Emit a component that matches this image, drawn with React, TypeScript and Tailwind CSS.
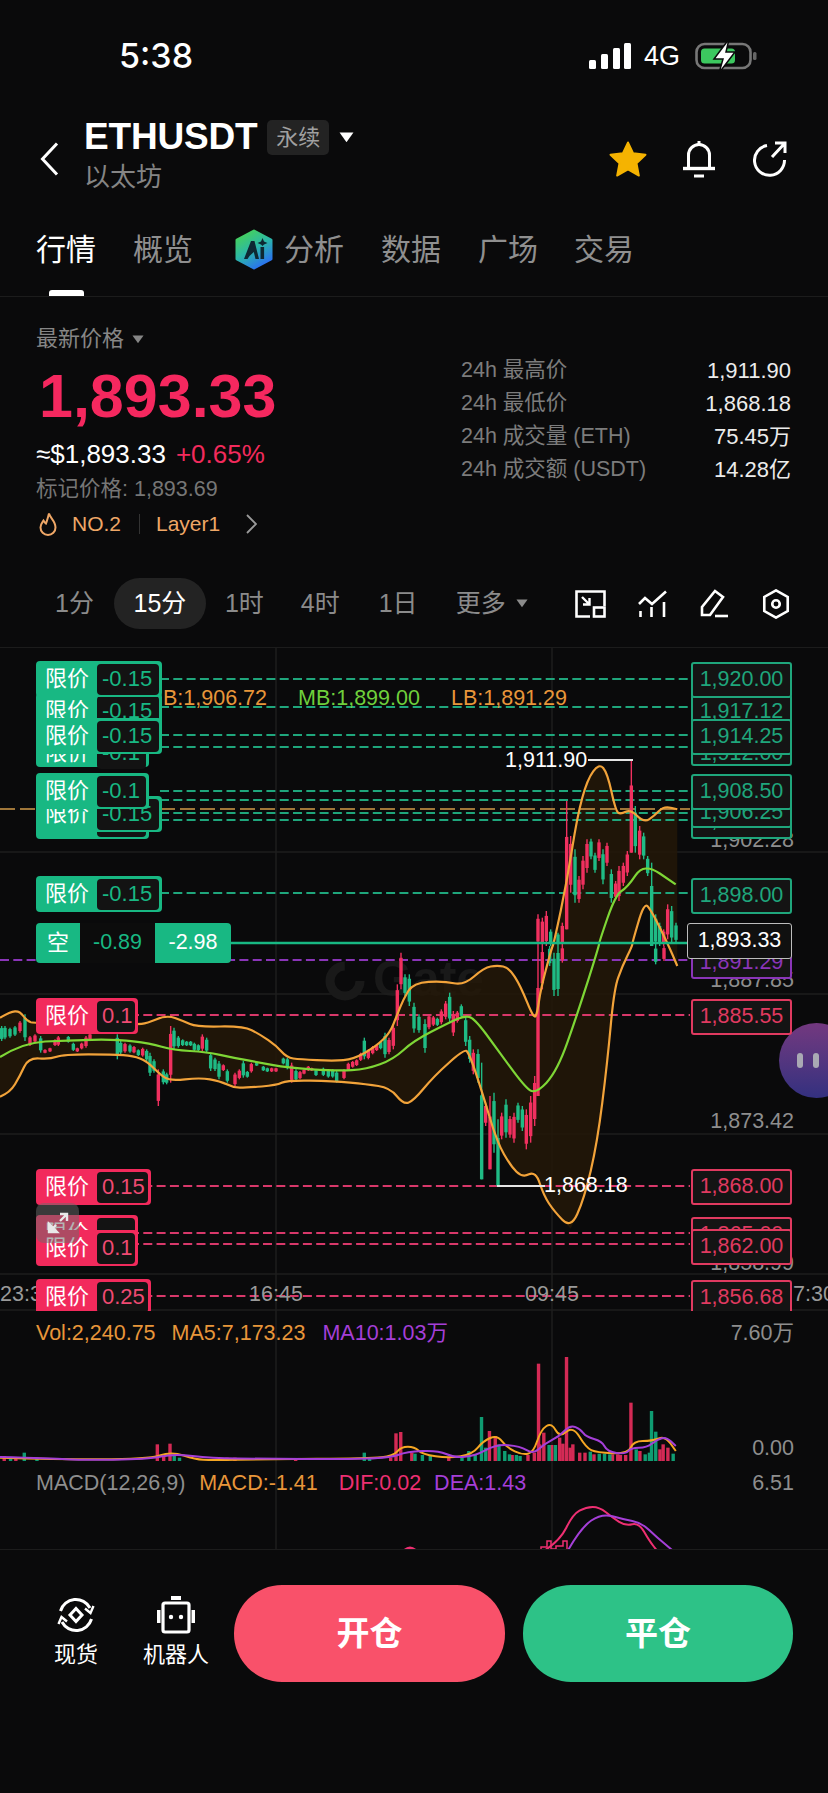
import React from "react";

const FONT = '"Liberation Sans","Noto Sans CJK SC",sans-serif';

type P = [number, number];
const z5 = (a: number[][]): P[] => a.map(([x, y]) => [x / 3, 945 + y / 3]);
const z6 = (a: number[][]): P[] => a.map(([x, y]) => [414 + x / 3, 945 + y / 3]);
const z4 = (a: number[][]): P[] => a.map(([x, y]) => [414 + x / 3, 645 + y / 3]);
const z7 = (a: number[][]): P[] => a.map(([x, y]) => [x / 1.894, 1300 + y / 3]);
const str = (p: P[]) => p.map(([x, y]) => `${x.toFixed(1)},${y.toFixed(1)}`).join(" ");
const smooth = (p: P[]) => {
  let d = `M${p[0][0].toFixed(1)} ${p[0][1].toFixed(1)}`;
  for (let i = 1; i < p.length - 1; i++) {
    const mx = (p[i][0] + p[i + 1][0]) / 2;
    const my = (p[i][1] + p[i + 1][1]) / 2;
    d += ` Q${p[i][0].toFixed(1)} ${p[i][1].toFixed(1)} ${mx.toFixed(1)} ${my.toFixed(1)}`;
  }
  const l = p[p.length - 1];
  return d + ` L${l[0].toFixed(1)} ${l[1].toFixed(1)}`;
};

const upper: P[] = [
  ...z5([[0,215],[30,197],[60,195],[80,225],[105,232],[410,235],[440,232],[500,207],[550,225],[590,243],[730,240],[780,265],[830,300],[860,335],[900,340],[1000,345],[1060,340],[1130,300],[1170,260]]),
  ...z5([[1190,210],[1210,160],[1240,110]]),
  ...z6([[90,105],[150,118],[210,65],[250,58],[285,65],[320,120],[360,220],[370,200],[380,130],[412,10]]),
  ...z4([[420,890],[460,700],[490,510],[520,400],[555,352],[580,380],[605,495],[620,505],[650,490],[690,530],[720,510],[750,480],[790,490]]),
];
const lower: P[] = [
  ...z5([[0,452],[30,440],[60,390],[85,335],[150,340],[190,325],[340,325],[400,330],[440,345],[480,385],[510,405],[600,395],[660,405],[700,425],[740,425],[830,418],[860,403],[1000,405],[1100,415],[1170,425],[1210,475],[1240,465]]),
  ...z6([[60,390],[150,310],[165,320],[205,440],[250,590],[290,660],[325,695],[365,675],[390,750],[420,795],[470,848],[510,760],[550,590],[580,350],[600,130],[625,60],[655,0]]),
  ...z4([[655,890],[690,770],[710,790],[760,890],[790,960]]),
];
const mid: P[] = [
  ...z5([[0,333],[70,290],[200,283],[350,280],[450,292],[520,312],[620,318],[700,335],[780,350],[860,365],[1010,375],[1100,370],[1180,340],[1240,285]]),
  ...z6([[105,230],[150,210],[180,215],[250,310],[330,420],[365,445],[430,375],[490,205],[555,0]]),
  ...z4([[555,890],[605,745],[640,725],[690,650],[785,715]]),
];

type C = [number, number, number, string];
const c5: C[] = [
  [5,240,285,"g"],[15,240,280,"g"],[30,245,275,"g"],[45,240,270,"g"],[60,225,260,"r"],[75,205,285,"g"],[90,270,300,"r"],[105,265,290,"r"],[122,270,320,"g"],[135,310,322,"r"],[150,305,318,"r"],[165,280,300,"r"],[175,270,300,"r"],[205,270,290,"g"],[220,290,315,"g"],[232,305,318,"r"],[245,290,310,"r"],[258,270,305,"r"],[270,262,285,"r"],[352,265,340,"g"],[362,285,325,"g"],[375,290,320,"r"],[390,295,320,"g"],[402,300,322,"r"],[415,310,330,"g"],[428,305,332,"r"],[440,310,345,"g"],[450,320,390,"g"],[462,340,380,"g"],[475,370,480,"r"],[490,370,415,"g"],[500,380,415,"g"],[512,240,410,"r"],[522,245,310,"g"],[535,270,305,"g"],[548,280,300,"g"],[560,285,300,"g"],[572,285,300,"g"],[583,290,315,"g"],[595,295,315,"g"],[607,265,315,"r"],[620,275,320,"g"],[632,320,375,"g"],[645,335,375,"g"],[657,345,400,"g"],[670,355,375,"r"],[682,370,410,"g"],[705,380,420,"r"],[718,370,400,"r"],[730,345,395,"g"],[742,375,395,"g"],[754,350,380,"r"],[770,350,360,"g"],[790,360,375,"g"],[802,365,378,"g"],[815,365,378,"r"],[828,365,378,"r"],[850,335,355,"g"],[862,335,370,"g"],[875,350,410,"r"],[888,370,405,"g"],[900,375,400,"r"],[912,370,385,"r"],[925,360,375,"r"],[935,365,375,"r"],[948,370,390,"g"],[970,365,390,"g"],[985,370,395,"g"],[998,370,395,"g"],[1010,375,410,"g"],[1032,370,400,"r"],[1045,350,375,"r"],[1058,345,365,"r"],[1070,340,360,"r"],[1082,320,345,"r"],[1093,275,340,"g"],[1105,310,340,"r"],[1118,300,325,"r"],[1130,295,315,"r"],[1142,285,310,"g"],[1155,260,335,"g"],[1167,275,325,"r"],[1180,235,310,"r"],[1192,115,240,"r"],[1203,20,130,"r"],[1215,85,150,"g"],[1228,85,180,"g"],
];
const c6: C[] = [
  [0,170,260,"g"],[15,205,260,"g"],[33,220,320,"g"],[45,205,250,"r"],[58,210,240,"r"],[70,215,240,"g"],[82,190,235,"r"],[95,165,220,"r"],[107,140,230,"g"],[118,195,270,"r"],[130,195,230,"r"],[142,175,215,"g"],[155,210,300,"g"],[167,270,350,"g"],[178,310,385,"r"],[192,310,410,"g"],[203,350,700,"g"],[215,470,540,"r"],[228,450,670,"r"],[240,440,620,"g"],[252,520,720,"g"],[263,500,580,"r"],[276,460,575,"g"],[288,510,575,"r"],[300,500,590,"r"],[312,470,530,"g"],[325,480,555,"g"],[337,490,610,"r"],[350,450,590,"r"],[362,390,540,"r"],[372,0,450,"r"],[385,0,130,"r"],[407,0,60,"g"],[420,20,150,"g"],[432,0,150,"g"],[445,0,50,"r"],[725,0,55,"g"],[750,0,45,"r"],
];
const c4: C[] = [
  [372,805,900,"r"],[385,815,900,"r"],[397,795,900,"r"],[410,850,900,"g"],[432,860,900,"g"],[445,830,900,"r"],[458,465,850,"r"],[470,570,740,"r"],[483,610,770,"g"],[495,690,770,"r"],[507,630,730,"r"],[519,580,680,"r"],[531,578,640,"g"],[543,620,680,"g"],[555,580,645,"r"],[567,610,715,"g"],[579,590,660,"r"],[592,670,770,"g"],[605,705,760,"r"],[615,660,765,"r"],[628,650,720,"r"],[640,615,690,"r"],[652,340,620,"r"],[664,480,620,"g"],[677,540,640,"r"],[689,560,640,"g"],[701,630,690,"g"],[713,650,900,"g"],[725,805,900,"g"],[737,830,900,"g"],[749,850,900,"r"],[761,775,880,"r"],[773,780,890,"g"],[786,830,890,"g"],
];

function Candles() {
  const all: { x: number; t: number; b: number; c: string }[] = [
    ...c5.map(([x, t, b, c]) => ({ x: x / 3, t: 945 + t / 3, b: 945 + b / 3, c })),
    ...c6.map(([x, t, b, c]) => ({ x: 414 + x / 3, t: 945 + t / 3, b: 945 + b / 3, c })),
    ...c4.map(([x, t, b, c]) => ({ x: 414 + x / 3, t: 645 + t / 3, b: 645 + b / 3, c })),
  ];
  return (
    <g>
      {all.map((k, i) => {
        const h = k.b - k.t;
        const col = k.c === "r" ? "#f0305f" : "#1fbb85";
        const inset = h > 60 ? h * 0.28 : h * 0.14;
        return (
          <g key={i}>
            <line x1={k.x} x2={k.x} y1={k.t} y2={k.b} stroke={col} strokeWidth={1.4} />
            <rect x={k.x - 1.7} y={k.t + inset} width={3.4} height={h - inset * (h > 60 ? 1 : 2)} fill={col} />
          </g>
        );
      })}
    </g>
  );
}

const volR: number[][] = [[1020,188],[1073,168],[1195,305],[750,397],[759,393],[298,430],[322,428],[927,390],[938,405],[1030,395],[1045,432],[1060,410],[1085,430],[1098,455],[1108,455],[1125,460],[1160,460],[1175,462],[1212,450],[1256,430],[1265,440],[970,462],[1000,462],[1012,455],[780,455],[8,465],[30,470],[310,465],[430,470],[445,470],[560,472],[740,470],[850,470],[1022,430],[1066,428],[1080,440],[1170,460],[1185,462],[1250,445]];
const volG: number[][] = [[912,348],[1234,330],[1242,392],[46,455],[690,455],[888,450],[900,462],[945,430],[956,450],[985,465],[1040,432],[1052,432],[1135,458],[1145,458],[1205,445],[1222,460],[1230,455],[1275,458],[786,458],[800,462],[815,465],[330,462],[340,470],[875,470],[20,468],[70,470],[700,468],[920,440],[965,460],[978,462],[1118,452],[1155,460]];

function Hexagon() {
  return (
    <svg width="38" height="41" viewBox="0 0 38 41" className="shrink-0">
      <defs>
        <linearGradient id="ai" x1="0.1" y1="0.1" x2="0.6" y2="1">
          <stop offset="0" stopColor="#45d05c" />
          <stop offset="0.5" stopColor="#2bb8a8" />
          <stop offset="1" stopColor="#2a74ee" />
        </linearGradient>
      </defs>
      <path d="M19 2 L36 11 V30 L19 39 L2 30 V11 Z" fill="url(#ai)" stroke="url(#ai)" strokeWidth="3" strokeLinejoin="round" />
      <path d="M9 30 L16 12 L19.5 12 L24 30 L20.5 30 L18.8 23 L14.5 27 L12.5 30 Z" fill="#0e2833" />
      <rect x="25.5" y="18" width="3.6" height="12" fill="#0e2833" />
      <path d="M27.5 9 L29 12.5 L32.5 14 L29 15.5 L27.5 17 L26 15.5 L22.5 14 L26 12.5 Z" fill="#0e2833" />
    </svg>
  );
}

function LeftTag({ top, w, tone, label, z = 1, h = 36 }: { top: number; w: number; tone: "g" | "r"; label: string; z?: number; h?: number }) {
  return (
    <div
      className={`absolute left-[36px] flex items-center rounded-[4px] pl-[9px] pr-[3px] text-[22px] text-white ${tone === "g" ? "bg-[#18b883]" : "bg-[#f22a5c]"}`}
      style={{ top: top - 647, width: w, height: h, zIndex: z }}
    >
      <span className="w-[52px] shrink-0 text-[22px] leading-none">限价</span>
      <span className={`flex h-[31px] flex-1 items-center rounded-[4px] bg-[#131313] pl-[5px] leading-none ${tone === "g" ? "text-[#18b883]" : "text-[#f04a72]"}`}>{label}</span>
    </div>
  );
}

function RightTag({ top, color, label, z = 1, h = 36 }: { top: number; color: string; label: string; z?: number; h?: number }) {
  return (
    <div
      className="absolute left-[691px] flex w-[101px] items-center justify-center rounded-[3px] border-2 bg-[#141414] text-[21.5px] leading-none"
      style={{ top: top - 647, height: h, borderColor: color, color, zIndex: z }}
    >
      {label}
    </div>
  );
}

function GreyPrice({ top, label }: { top: number; label: string }) {
  return (
    <div className="absolute right-[34px] text-[21.5px] leading-none text-[#8e8e8e]" style={{ top: top - 647 - 11 }}>
      {label}
    </div>
  );
}

function AxisLabel({ x, label, center }: { x: number; label: string; center?: boolean }) {
  return (
    <div className={`absolute top-[636px] text-[21.5px] leading-none text-[#9a9a9a] ${center ? "-translate-x-1/2" : ""}`} style={{ left: x }}>
      {label}
    </div>
  );
}

function ChartSvg() {
  const gd = [678, 706, 734, 746, 790, 799, 812, 819, 892];
  const rd = [1014, 1185, 1232, 1243, 1295];
  return (
    <svg className="absolute left-0 top-0" width="828" height="903" viewBox="0 647 828 903">
      {[851, 993, 1133, 1273, 1309].map((y) => (
        <line key={y} x1="0" x2="828" y1={y} y2={y} stroke="#1e1e1e" strokeWidth="1.5" />
      ))}
      <line x1="276" x2="276" y1="647" y2="1550" stroke="#1e1e1e" strokeWidth="1.5" />
      <line x1="552" x2="552" y1="647" y2="1550" stroke="#1e1e1e" strokeWidth="1.5" />
      <circle cx="345" cy="980" r="15" fill="none" stroke="#191919" strokeWidth="9" strokeDasharray="70 24" />
      <polygon points={str([...upper, ...[...lower].reverse()])} fill="#241808" fillOpacity="0.8" />
      {gd.map((y) => (
        <line key={y} x1="160" x2="690" y1={y} y2={y} stroke="#1fa67c" strokeWidth="2" strokeDasharray="9 4.3" />
      ))}
      <line x1="0" x2="690" y1="808" y2="808" stroke="#d19a4a" strokeWidth="1.5" strokeDasharray="15 5" />
      {rd.map((y) => (
        <line key={y} x1="130" x2="690" y1={y} y2={y} stroke="#d8386a" strokeWidth="2" strokeDasharray="9 4.3" />
      ))}
      <line x1="0" x2="690" y1="959" y2="959" stroke="#8a35b8" strokeWidth="2" strokeDasharray="9 4.3" />
      <Candles />
      <path d={smooth(upper)} fill="none" stroke="#f2a33a" strokeWidth="2.2" />
      <path d={smooth(lower)} fill="none" stroke="#f2a33a" strokeWidth="2.2" />
      <path d={smooth(mid)} fill="none" stroke="#7ed636" strokeWidth="2.2" />
      <line x1="231" x2="690" y1="942" y2="942" stroke="#18b883" strokeWidth="2.5" />
      <line x1="588" x2="633" y1="759" y2="759" stroke="#e5e5e5" strokeWidth="2" />
      <line x1="497" x2="545" y1="1185" y2="1185" stroke="#e5e5e5" strokeWidth="2" />
      {volR.map(([x, y], i) => {
        const X = x / 1.894;
        const Y = 1300 + y / 3;
        return <rect key={"r" + i} x={X - 1.7} y={Y} width="3.4" height={1460 - Y} fill="#d42a55" />;
      })}
      {volG.map(([x, y], i) => {
        const X = x / 1.894;
        const Y = 1300 + y / 3;
        return <rect key={"g" + i} x={X - 1.7} y={Y} width="3.4" height={1460 - Y} fill="#0f9c72" />;
      })}
      <path
        d={smooth(z7([[0,470],[100,475],[280,475],[325,452],[370,475],[400,478],[500,475],[700,472],[745,465],[760,437],[785,437],[800,460],[850,472],[895,460],[915,420],[942,402],[960,440],[990,462],[1010,455],[1025,385],[1045,365],[1060,410],[1085,375],[1110,440],[1130,455],[1190,458],[1200,420],[1235,420],[1260,405],[1280,450]]))}
        fill="none" stroke="#f5a623" strokeWidth="2"
      />
      <path
        d={smooth(z7([[0,468],[100,472],[150,477],[280,475],[330,458],[400,472],[500,473],[650,475],[740,470],[770,452],[830,448],[860,470],[900,465],[940,430],[985,435],[1010,460],[1030,430],[1060,405],[1080,372],[1100,385],[1110,408],[1140,420],[1150,452],[1185,460],[1195,440],[1225,440],[1245,415],[1262,408],[1280,435]]))}
        fill="none" stroke="#a53fd8" strokeWidth="2"
      />
      <path d={smooth(z7([[1030,750],[1060,720],[1085,640],[1110,618],[1135,618],[1160,650],[1185,675],[1210,665],[1230,720],[1245,750]]))} fill="none" stroke="#ee2f72" strokeWidth="2" />
      <path d={smooth(z7([[1075,750],[1100,680],[1140,637],[1180,655],[1215,665],[1245,710],[1275,750]]))} fill="none" stroke="#a53fd8" strokeWidth="2" />
      <path d="M404 1550 Q410 1544 416 1550" fill="none" stroke="#ee2f72" strokeWidth="3" />
      <path d="M541 1550 V1546 H547 V1540 H551 V1548 H556 V1545 H563 V1540 H567 V1550" fill="none" stroke="#ee2f72" strokeWidth="1.5" />
    </svg>
  );
}

function Chart() {
  return (
    <div className="relative h-[903px] w-full overflow-hidden border-y border-[#1c1c1c]">
      <div className="absolute left-[373px] top-[306px] text-[50px] font-bold leading-none text-[#191919]">Gate</div>
      <ChartSvg />

      <div className="absolute left-[163px] top-[40px] z-10 text-[21.5px] leading-none text-[#e8963a]">B:1,906.72</div>
      <div className="absolute left-[298px] top-[40px] z-10 text-[21.5px] leading-none text-[#6fd03c]">MB:1,899.00</div>
      <div className="absolute left-[451px] top-[40px] z-10 text-[21.5px] leading-none text-[#e8963a]">LB:1,891.29</div>

      <LeftTag top={738} w={113} tone="g" label="-0.1" z={1} h={28} />
      <LeftTag top={692} w={126} tone="g" label="-0.15" z={2} />
      <LeftTag top={660} w={126} tone="g" label="-0.15" z={3} />
      <LeftTag top={717} w={126} tone="g" label="-0.15" z={4} />
      <LeftTag top={802} w={113} tone="g" label="-0.1" z={1} />
      <LeftTag top={795} w={126} tone="g" label="-0.15" z={2} />
      <LeftTag top={772} w={113} tone="g" label="-0.1" z={3} />
      <LeftTag top={875} w={126} tone="g" label="-0.15" />

      <div className="absolute left-[36px] top-[275px] z-[5] flex h-[40px] w-[195px] items-stretch overflow-hidden rounded-[4px] bg-[#18b883] text-[21.5px] leading-none text-white">
        <span className="flex w-[44px] items-center justify-center text-[22px]">空</span>
        <span className="flex w-[75px] items-center justify-center bg-[#0c0c0c] text-[#18b883]">-0.89</span>
        <span className="flex flex-1 items-center justify-center">-2.98</span>
      </div>

      <LeftTag top={997} w={102} tone="r" label="0.1" />
      <LeftTag top={1168} w={115} tone="r" label="0.15" />
      <LeftTag top={1214} w={102} tone="r" label="" z={1} />
      <LeftTag top={1229} w={102} tone="r" label="0.1" z={2} />
      <div className="absolute left-0 top-[631px] z-[3] h-[32px] w-full overflow-hidden">
        <LeftTag top={647} w={115} tone="r" label="0.25" />
        <RightTag top={648} color="#e03a60" label="1,856.68" />
      </div>

      <div className="absolute left-[36px] top-[555px] z-[6] flex h-[40px] w-[43px] items-center justify-center rounded-[8px] bg-[#6a6a6a]/50">
        <svg width="24" height="24" viewBox="0 0 24 24" fill="none" stroke="#e8e8e8" strokeWidth="2.4">
          <path d="M14 3h7v7M21 3l-7 7" />
          <path d="M3 21v-8l8 8zM3 21l7-7" fill="#e8e8e8" />
        </svg>
      </div>

      <GreyPrice top={840} label="1,902.28" />
      <GreyPrice top={980} label="1,887.85" />
      <GreyPrice top={1121} label="1,873.42" />
      <GreyPrice top={1263} label="1,858.99" />

      <RightTag top={741} color="#1fa67c" label="1,912.00" z={1} h={24} />
      <RightTag top={661} color="#1fa67c" label="1,920.00" z={3} />
      <RightTag top={693} color="#1fa67c" label="1,917.12" z={2} />
      <RightTag top={718} color="#1fa67c" label="1,914.25" z={4} />
      <RightTag top={802} color="#1fa67c" label="1,906.00" z={1} h={36} />
      <RightTag top={797} color="#1fa67c" label="1,906.25" z={2} h={30} />
      <RightTag top={773} color="#1fa67c" label="1,908.50" z={3} />
      <RightTag top={877} color="#1fa67c" label="1,898.00" />
      <RightTag top={946} color="#8a35b8" label="1,891.29" z={1} h={32} />
      <div className="absolute left-[687px] top-[275px] z-[3] flex h-[36px] w-[105px] items-center justify-center rounded-[3px] border-[1.5px] border-[#bdbdbd] bg-[#101010] text-[21.5px] leading-none text-white">1,893.33</div>
      <RightTag top={998} color="#e03a60" label="1,885.55" />
      <RightTag top={1168} color="#e03a60" label="1,868.00" />
      <RightTag top={1216} color="#e03a60" label="1,865.00" z={1} />
      <RightTag top={1228} color="#e03a60" label="1,862.00" z={2} />

      <div className="absolute left-[505px] top-[102px] text-[21.5px] leading-none text-white">1,911.90</div>
      <div className="absolute left-[544px] top-[527px] text-[21.5px] leading-none text-white">1,868.18</div>

      <AxisLabel x={0} label="23:3" />
      <AxisLabel x={276} label="16:45" center />
      <AxisLabel x={552} label="09:45" center />
      <AxisLabel x={793} label="7:30" />

      <div className="absolute left-[779px] top-[375px] flex h-[75px] w-[75px] items-center gap-[10px] rounded-full bg-gradient-to-b from-[#73387f] to-[#33307f] pl-[18px]">
        <span className="h-[15px] w-[6px] rounded-full bg-[#a9a9b4]" />
        <span className="h-[15px] w-[6px] rounded-full bg-[#a9a9b4]" />
      </div>

      <div className="absolute left-[36px] right-[34px] top-[675px] flex items-center text-[21.5px] leading-none">
        <span className="text-[#e8963a]">Vol:2,240.75</span>
        <span className="ml-[16px] text-[#e8963a]">MA5:7,173.23</span>
        <span className="ml-[17px] text-[#a53fd8]">MA10:1.03万</span>
        <span className="ml-auto text-[#8e8e8e]">7.60万</span>
      </div>
      <div className="absolute right-[34px] top-[790px] text-[21.5px] leading-none text-[#8e8e8e]">0.00</div>
      <div className="absolute left-[36px] right-[34px] top-[825px] flex items-center text-[21.5px] leading-none">
        <span className="text-[#8e8e8e]">MACD(12,26,9)</span>
        <span className="ml-[14px] text-[#e8963a]">MACD:-1.41</span>
        <span className="ml-[21px] text-[#ee2f72]">DIF:0.02</span>
        <span className="ml-[13px] text-[#a53fd8]">DEA:1.43</span>
        <span className="ml-auto text-[#8e8e8e]">6.51</span>
      </div>
    </div>
  );
}

function Tri({ size = 14, color = "#fff" }: { size?: number; color?: string }) {
  return (
    <svg width={size} height={size * 0.72} viewBox="0 0 14 10" className="shrink-0">
      <path d="M0.5 0.5h13L7 9.5z" fill={color} />
    </svg>
  );
}

function Stat({ label, value }: { label: string; value: string }) {
  return (
    <div className="flex h-[33px] items-center justify-between">
      <span className="text-[#7c7c7c]">{label}</span>
      <span className="text-[22px] text-[#ececec]">{value}</span>
    </div>
  );
}

export default function App() {
  return (
    <div className="flex h-[1793px] w-[828px] flex-col overflow-hidden bg-[#0a0a0b] text-white" style={{ fontFamily: FONT }}>
      <div className="flex h-[112px] items-center pl-[119px] pr-[70px]">
        <span className="text-[34px] font-medium leading-none" style={{ fontFamily: "Inter, sans-serif" }}>5:38</span>
        <div className="ml-auto flex items-center">
          <svg width="42" height="26" viewBox="0 0 42 26" fill="#fff">
            <rect x="0" y="17" width="7" height="9" rx="1.5" />
            <rect x="12" y="11" width="7" height="15" rx="1.5" />
            <rect x="24" y="5" width="7" height="21" rx="1.5" />
            <rect x="35" y="0" width="7" height="26" rx="1.5" />
          </svg>
          <span className="ml-[13px] text-[27px] leading-none">4G</span>
          <svg className="ml-[15px]" width="63" height="34" viewBox="0 0 63 34">
            <rect x="1.5" y="5" width="54" height="24" rx="8" fill="none" stroke="#777" strokeWidth="2.6" />
            <rect x="6" y="9.5" width="34" height="15" rx="3.5" fill="#3cc85f" />
            <rect x="58" y="13" width="3.5" height="8" rx="1.5" fill="#666" />
            <path d="M34 0 L19 20 H28 L24 34 L40 13 H31 Z" fill="#fff" stroke="#0a0a0b" strokeWidth="1.5" />
          </svg>
        </div>
      </div>

      <div className="flex h-[84px] items-start pl-[40px] pr-[41px] pt-[3px]">
        <svg className="mt-[27px]" width="19" height="34" viewBox="0 0 19 34" fill="none" stroke="#fff" strokeWidth="3">
          <path d="M17 1.5 L2.5 17 L17 32.5" />
        </svg>
        <div className="ml-[25px] flex flex-col">
          <div className="flex items-center">
            <span className="text-[37px] font-bold leading-[44px] tracking-[-0.2px]">ETHUSDT</span>
            <span className="ml-[10px] flex h-[35px] w-[62px] items-center justify-center rounded-[5px] bg-[#232323] text-[22px] text-[#a0a0a0]">永续</span>
            <span className="ml-[10px]"><Tri size={15} /></span>
          </div>
          <span className="mt-[3px] text-[26px] leading-[30px] text-[#858585]">以太坊</span>
        </div>
        <div className="ml-auto mt-[25px] flex items-center">
          <svg width="38" height="36" viewBox="0 0 40 38">
            <path d="M20 1.5 L25.5 13 L38.5 14.5 L29 23.5 L31.5 36.5 L20 30 L8.5 36.5 L11 23.5 L1.5 14.5 L14.5 13 Z" fill="#f5b301" stroke="#f5b301" strokeLinejoin="round" strokeWidth="2" />
          </svg>
          <svg className="ml-[35px]" width="34" height="38" viewBox="0 0 34 38" fill="none" stroke="#fff" strokeWidth="3">
            <path d="M17 1v4" />
            <path d="M6.5 27V15a10.5 10.5 0 0 1 21 0v12" />
            <path d="M1 28.5h32" strokeWidth="3.4" />
            <path d="M12 36h10" />
          </svg>
          <svg className="ml-[37px]" width="34" height="36" viewBox="0 0 34 36" fill="none" stroke="#fff" strokeWidth="3">
            <path d="M14 4.5A15 15 0 1 0 31.5 19" />
            <path d="M22 2h10v10M32 2 L19 16" />
          </svg>
        </div>
      </div>

      <div className="relative flex h-[101px] items-start border-b border-[#1c1c1c] pl-[36px] pt-[34px] text-[30px] leading-[40px] text-[#8f8f8f]">
        <span className="text-white">行情</span>
        <span className="ml-[37px]">概览</span>
        <span className="ml-[42px] -mt-[1px] flex items-center gap-[11px]"><Hexagon />分析</span>
        <span className="ml-[37px]">数据</span>
        <span className="ml-[37px]">广场</span>
        <span className="ml-[36px]">交易</span>
        <span className="absolute bottom-0 left-[49px] h-[6px] w-[35px] rounded-t-[3px] bg-white" />
      </div>

      <div className="flex h-[350px] flex-col">
        <div className="flex">
          <div className="flex w-[425px] flex-col pl-[36px]">
            <div className="mt-[29px] flex items-center gap-[8px] text-[22px] leading-[26px] text-[#868686]">最新价格<Tri size={12} color="#868686" /></div>
            <div className="ml-[3px] mt-[12px] text-[61px] font-bold leading-[64px]" style={{ color: "#f5285f" }}>1,893.33</div>
            <div className="mt-[11px] flex items-center text-[26px] leading-[30px]">
              <span>≈$1,893.33</span>
              <span className="ml-[10px] text-[#f22a5c]">+0.65%</span>
            </div>
            <div className="mt-[7px] text-[21.5px] leading-[26px] text-[#767676]">标记价格: 1,893.69</div>
            <div className="mt-[8px] flex h-[28px] items-center text-[21px] text-[#efa767]">
              <svg className="ml-[3px]" width="18" height="24" viewBox="0 0 18 24" fill="none" stroke="#efa767" strokeWidth="2">
                <path d="M10 1.5C11 6 16.5 9 16.5 15.5A7.5 7.5 0 0 1 1.5 15.5C1.5 12 3.5 10 4.5 8.5C5.5 10 6 11 7 11.5C8 9 9 5 10 1.5Z" />
              </svg>
              <span className="ml-[15px]">NO.2</span>
              <span className="ml-[18px] h-[20px] w-px bg-[#333]" />
              <span className="ml-[16px]">Layer1</span>
              <svg className="ml-[26px]" width="11" height="20" viewBox="0 0 11 20" fill="none" stroke="#9a9a9a" strokeWidth="1.8">
                <path d="M1 1l9 9-9 9" />
              </svg>
            </div>
          </div>
          <div className="ml-[36px] mr-[37px] mt-[57px] flex-1 text-[21.5px] leading-none">
            <Stat label="24h 最高价" value="1,911.90" />
            <Stat label="24h 最低价" value="1,868.18" />
            <Stat label="24h 成交量 (ETH)" value="75.45万" />
            <Stat label="24h 成交额 (USDT)" value="14.28亿" />
          </div>
        </div>
        <div className="mt-auto mb-[18px] flex h-[51px] items-center text-[25px] leading-none text-[#8b8b8b]">
          <span className="ml-[55px]">1分</span>
          <span className="ml-[20px] flex h-[51px] w-[92px] items-center justify-center rounded-[26px] bg-[#232323] text-white">15分</span>
          <span className="ml-[19px]">1时</span>
          <span className="ml-[37px]">4时</span>
          <span className="ml-[39px]">1日</span>
          <span className="ml-[38px]">更多</span>
          <span className="ml-[10px]"><Tri size={12} color="#8b8b8b" /></span>
          <svg className="ml-[47px]" width="31" height="28" viewBox="0 0 31 28" fill="none" stroke="#fff" strokeWidth="2.6">
            <path d="M15 26.5H1.5V1.5H29.5V16" />
            <path d="M7 7l7 7M14.5 8v6.5H8" strokeWidth="2.4" />
            <rect x="19" y="17.5" width="10.5" height="9" />
          </svg>
          <svg className="ml-[32px]" width="29" height="28" viewBox="0 0 29 28" fill="none" stroke="#fff" strokeWidth="2.6">
            <path d="M1 14l6-6 7 6L28 1.5" />
            <path d="M2.5 21v6M13.5 17v10M26 12v15" />
          </svg>
          <svg className="ml-[33px]" width="28" height="30" viewBox="0 0 28 30" fill="none" stroke="#fff" strokeWidth="2.6">
            <path d="M2 18 L15 2 L23 8 L10 26 H2 Z" />
            <path d="M15 27h13" />
          </svg>
          <svg className="ml-[34px]" width="28" height="30" viewBox="0 0 28 32" fill="none" stroke="#fff" strokeWidth="2.8">
            <path d="M14 1.5 L26.5 8.5 V23.5 L14 30.5 L1.5 23.5 V8.5 Z" />
            <circle cx="14" cy="16" r="4" />
          </svg>
        </div>
      </div>

      <Chart />

      <div className="flex flex-1 items-start pt-[35px]">
        <div className="flex w-[234px] shrink-0 pt-[11px] text-[22px] leading-none text-white">
          <div className="ml-[55px] flex w-[42px] flex-col items-center">
            <svg width="38" height="38" viewBox="0 0 38 38" fill="none" stroke="#fff" strokeWidth="3">
              <path d="M3.5 15A16 16 0 0 1 33 12" />
              <path d="M34.5 23A16 16 0 0 1 5 26" />
              <path d="M28 12.5L33.5 17L36.5 10M10 25.5L4.5 21L1.5 28" strokeWidth="2.4" />
              <path d="M19 12.5l6 6.5-6 6.5-6-6.5z" />
            </svg>
            <span className="mt-[10px] whitespace-nowrap">现货</span>
          </div>
          <div className="ml-[46px] flex w-[66px] flex-col items-center">
            <svg width="38" height="38" viewBox="0 0 38 38" fill="none" stroke="#fff" strokeWidth="3.2">
              <rect x="14" y="0" width="10" height="4" fill="#fff" stroke="none" />
              <rect x="6" y="7" width="26" height="29" rx="2" />
              <rect x="0" y="14" width="3.5" height="13" fill="#fff" stroke="none" />
              <rect x="34.5" y="14" width="3.5" height="13" fill="#fff" stroke="none" />
              <circle cx="14" cy="21" r="2.2" fill="#fff" stroke="none" />
              <circle cx="24" cy="21" r="2.2" fill="#fff" stroke="none" />
            </svg>
            <span className="mt-[10px] whitespace-nowrap">机器人</span>
          </div>
        </div>
        <button className="flex h-[97px] w-[271px] items-center justify-center rounded-[48px] bg-[#f9516a] text-[33px] font-bold text-white">开仓</button>
        <button className="ml-[18px] flex h-[97px] w-[270px] items-center justify-center rounded-[48px] bg-[#2dc287] text-[33px] font-bold text-white">平仓</button>
      </div>
    </div>
  );
}
